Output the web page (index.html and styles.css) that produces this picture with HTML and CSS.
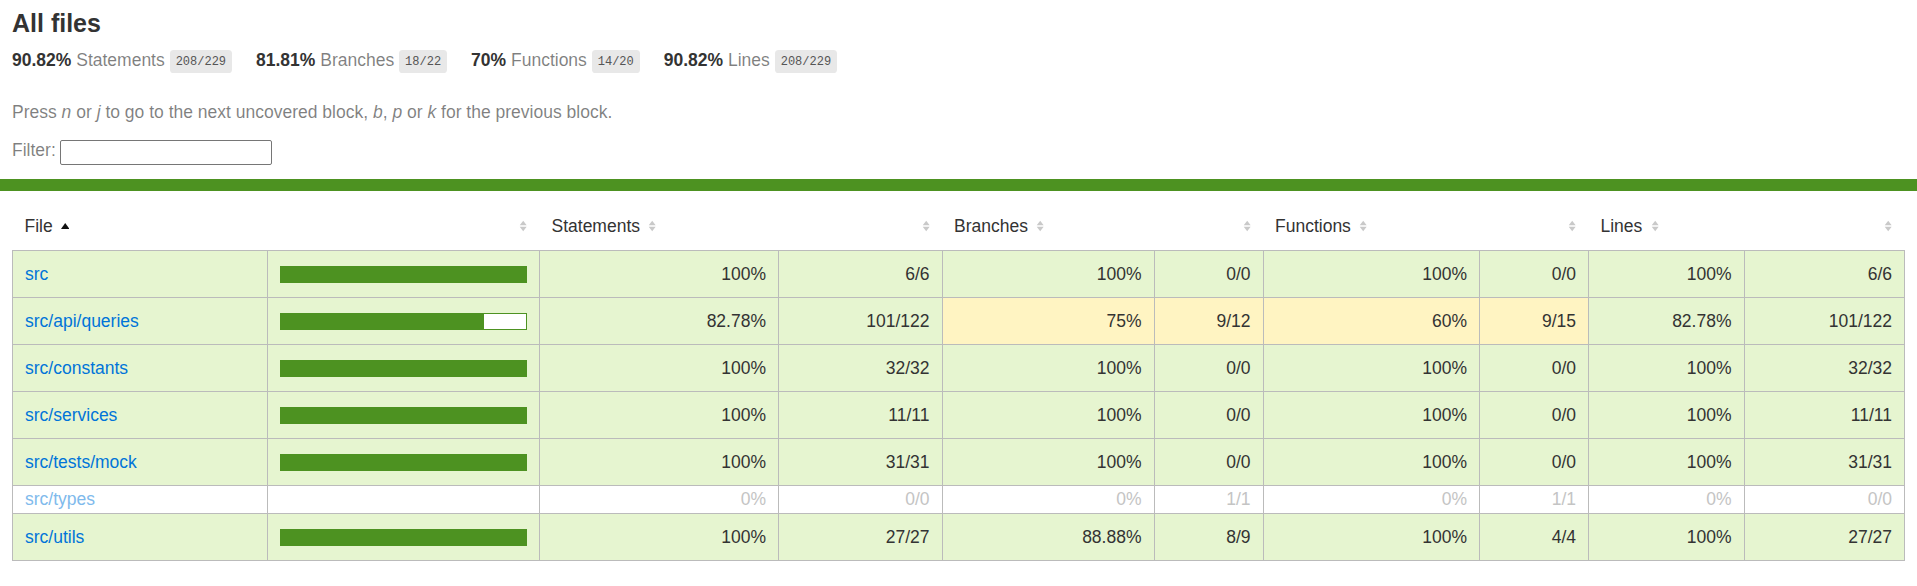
FILE: index.html
```html
<!DOCTYPE html>
<html lang="en">
<head>
<meta charset="utf-8">
<title>Code coverage report for All files</title>
<link rel="stylesheet" href="styles.css">
</head>
<body>
<div class="pad1 head">
  <h1 class="title">All files</h1>
  <div class="summary">
    <div class="stat"><span class="strong">90.82% </span> <span class="quiet">Statements</span> <span class="fraction">208/229</span></div>
    <div class="stat"><span class="strong">81.81% </span> <span class="quiet">Branches</span> <span class="fraction">18/22</span></div>
    <div class="stat"><span class="strong">70% </span> <span class="quiet">Functions</span> <span class="fraction">14/20</span></div>
    <div class="stat"><span class="strong">90.82% </span> <span class="quiet">Lines</span> <span class="fraction">208/229</span></div>
  </div>
  <p class="quiet hint">Press <em>n</em> or <em>j</em> to go to the next uncovered block, <em>b</em>, <em>p</em> or <em>k</em> for the previous block.</p>
  <div class="quiet filter"><label class="filter-label" for="fileSearch">Filter:</label><input type="search" id="fileSearch" class="search"></div>
</div>
<div class="status-line"></div>
<div class="pad1">
<table class="cov">
  <colgroup>
    <col class="w-file"><col class="w-pic"><col class="w-spct"><col class="w-sabs"><col class="w-bpct"><col class="w-babs"><col class="w-fpct"><col class="w-fabs"><col class="w-lpct"><col>
  </colgroup>
  <thead>
    <tr>
      <th class="file">File<svg class="sorter sorted" viewBox="0 0 7 10"><path d="M0 7.4L3.5 2.6L7 7.4Z"/></svg></th>
      <th class="r"><svg class="sorter" viewBox="0 0 7 10"><path d="M0.6 4.3L3.5 0.6L6.4 4.3Z M0.6 5.7L6.4 5.7L3.5 9.4Z"/></svg></th>
      <th>Statements<svg class="sorter" viewBox="0 0 7 10"><path d="M0.6 4.3L3.5 0.6L6.4 4.3Z M0.6 5.7L6.4 5.7L3.5 9.4Z"/></svg></th>
      <th class="r"><svg class="sorter" viewBox="0 0 7 10"><path d="M0.6 4.3L3.5 0.6L6.4 4.3Z M0.6 5.7L6.4 5.7L3.5 9.4Z"/></svg></th>
      <th>Branches<svg class="sorter" viewBox="0 0 7 10"><path d="M0.6 4.3L3.5 0.6L6.4 4.3Z M0.6 5.7L6.4 5.7L3.5 9.4Z"/></svg></th>
      <th class="r"><svg class="sorter" viewBox="0 0 7 10"><path d="M0.6 4.3L3.5 0.6L6.4 4.3Z M0.6 5.7L6.4 5.7L3.5 9.4Z"/></svg></th>
      <th>Functions<svg class="sorter" viewBox="0 0 7 10"><path d="M0.6 4.3L3.5 0.6L6.4 4.3Z M0.6 5.7L6.4 5.7L3.5 9.4Z"/></svg></th>
      <th class="r"><svg class="sorter" viewBox="0 0 7 10"><path d="M0.6 4.3L3.5 0.6L6.4 4.3Z M0.6 5.7L6.4 5.7L3.5 9.4Z"/></svg></th>
      <th>Lines<svg class="sorter" viewBox="0 0 7 10"><path d="M0.6 4.3L3.5 0.6L6.4 4.3Z M0.6 5.7L6.4 5.7L3.5 9.4Z"/></svg></th>
      <th class="r"><svg class="sorter" viewBox="0 0 7 10"><path d="M0.6 4.3L3.5 0.6L6.4 4.3Z M0.6 5.7L6.4 5.7L3.5 9.4Z"/></svg></th>
    </tr>
  </thead>
  <tbody>
    <tr>
      <td class="file high"><a href="#">src</a></td>
      <td class="pic high"><div class="chart"><div class="cover-fill" style="width:100%"></div></div></td>
      <td class="num high">100%</td><td class="num high">6/6</td>
      <td class="num high">100%</td><td class="num high">0/0</td>
      <td class="num high">100%</td><td class="num high">0/0</td>
      <td class="num high">100%</td><td class="num high">6/6</td>
    </tr>
    <tr>
      <td class="file high"><a href="#">src/api/queries</a></td>
      <td class="pic high"><div class="chart"><div class="cover-fill" style="width:82.78%"></div></div></td>
      <td class="num high">82.78%</td><td class="num high">101/122</td>
      <td class="num medium">75%</td><td class="num medium">9/12</td>
      <td class="num medium">60%</td><td class="num medium">9/15</td>
      <td class="num high">82.78%</td><td class="num high">101/122</td>
    </tr>
    <tr>
      <td class="file high"><a href="#">src/constants</a></td>
      <td class="pic high"><div class="chart"><div class="cover-fill" style="width:100%"></div></div></td>
      <td class="num high">100%</td><td class="num high">32/32</td>
      <td class="num high">100%</td><td class="num high">0/0</td>
      <td class="num high">100%</td><td class="num high">0/0</td>
      <td class="num high">100%</td><td class="num high">32/32</td>
    </tr>
    <tr>
      <td class="file high"><a href="#">src/services</a></td>
      <td class="pic high"><div class="chart"><div class="cover-fill" style="width:100%"></div></div></td>
      <td class="num high">100%</td><td class="num high">11/11</td>
      <td class="num high">100%</td><td class="num high">0/0</td>
      <td class="num high">100%</td><td class="num high">0/0</td>
      <td class="num high">100%</td><td class="num high">11/11</td>
    </tr>
    <tr>
      <td class="file high"><a href="#">src/tests/mock</a></td>
      <td class="pic high"><div class="chart"><div class="cover-fill" style="width:100%"></div></div></td>
      <td class="num high">100%</td><td class="num high">31/31</td>
      <td class="num high">100%</td><td class="num high">0/0</td>
      <td class="num high">100%</td><td class="num high">0/0</td>
      <td class="num high">100%</td><td class="num high">31/31</td>
    </tr>
    <tr class="empty-row">
      <td class="file empty"><a href="#">src/types</a></td>
      <td class="pic empty"></td>
      <td class="num empty">0%</td><td class="num empty">0/0</td>
      <td class="num empty">0%</td><td class="num empty">1/1</td>
      <td class="num empty">0%</td><td class="num empty">1/1</td>
      <td class="num empty">0%</td><td class="num empty">0/0</td>
    </tr>
    <tr>
      <td class="file high"><a href="#">src/utils</a></td>
      <td class="pic high"><div class="chart"><div class="cover-fill" style="width:100%"></div></div></td>
      <td class="num high">100%</td><td class="num high">27/27</td>
      <td class="num high">88.88%</td><td class="num high">8/9</td>
      <td class="num high">100%</td><td class="num high">4/4</td>
      <td class="num high">100%</td><td class="num high">27/27</td>
    </tr>
  </tbody>
</table>
</div>
</body>
</html>
```

FILE: styles.css
```css
* { box-sizing: border-box; }
html, body { margin: 0; padding: 0; }
body {
  font-family: "Liberation Sans", Arial, Helvetica, sans-serif;
  font-size: 17.5px;
  color: #333;
  background: #fff;
}
a { color: #0074D9; text-decoration: none; }

.pad1 { padding: 12px; }

.title {
  margin: 0;
  font-size: 25px;
  line-height: 23px;
  font-weight: bold;
}

.summary { display: flex; }
.stat {
  padding: 12px 24px 12px 0;
  line-height: 26px;
  white-space: nowrap;
}
.strong { font-weight: bold; }
.quiet { color: rgba(0, 0, 0, 0.5); }
.fraction {
  font-family: "Liberation Mono", "DejaVu Sans Mono", monospace;
  font-size: 12px;
  color: #555;
  background: #e8e8e8;
  padding: 4.8px 6px;
  border-radius: 3.6px;
  vertical-align: middle;
}

.hint {
  margin: 16.8px 0 15px;
  line-height: 19.3px;
}

.filter {
  display: flex;
  align-items: center;
  gap: 4px;
  height: 30px;
}
.filter-label { padding-bottom: 4px; }
.search {
  width: 212px;
  height: 25px;
  margin: 0;
  border: 1px solid #767676;
  border-radius: 2px;
  background: #fff;
  font: inherit;
  font-size: 16px;
  -webkit-appearance: none;
  appearance: none;
}

.status-line {
  height: 12px;
  background: rgb(77, 146, 33);
}

.cov {
  width: 100%;
  border-collapse: collapse;
  table-layout: fixed;
}
.w-file { width: 254.5px; }
.w-pic { width: 272.5px; }
.w-spct { width: 239px; }
.w-sabs { width: 163.5px; }
.w-bpct { width: 212px; }
.w-babs { width: 109px; }
.w-fpct { width: 216.5px; }
.w-fabs { width: 109px; }
.w-lpct { width: 155.5px; }

.cov tr { border-bottom: 1px solid #bbb; }
.cov tbody { border: 1px solid #bbb; }
.cov th, .cov td { padding: 12px; }
.cov th {
  text-align: left;
  font-weight: normal;
  white-space: nowrap;
  line-height: 23px;
}
.cov th.r { text-align: right; }
.cov td {
  border-right: 1px solid #bbb;
  line-height: 22px;
  vertical-align: top;
  white-space: nowrap;
}
.cov td:last-child { border-right: none; }
.cov td.num { text-align: right; }

.sorter {
  width: 8.4px;
  height: 12px;
  margin-left: 8.4px;
  fill: #c9c9c9;
  vertical-align: baseline;
}
.sorter.sorted { fill: #111; }

.high { background: rgb(230, 245, 208); }
.medium { background: #fff4c2; }

.chart {
  display: flex;
  height: 16.8px;
  margin: 2.6px 0;
  border: 1px solid rgb(77, 146, 33);
  background: #fff;
}
.cover-fill {
  height: 100%;
  background: rgb(77, 146, 33);
}

.cov td.empty {
  padding-top: 5px;
  padding-bottom: 5px;
  line-height: 16.8px;
  color: #c4c4c4;
  background: #fff;
}
.cov td.empty a { color: #80baec; }
```
